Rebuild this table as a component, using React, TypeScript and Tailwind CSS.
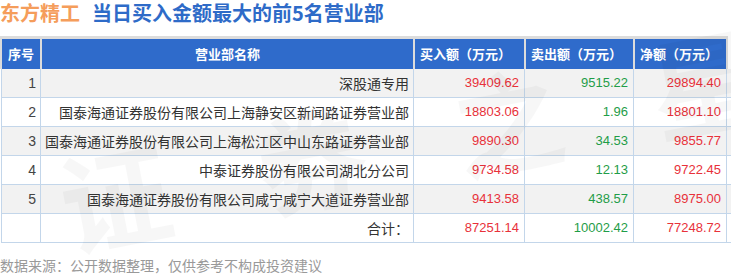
const ROWS = [
  { no: "1", name: "深股通专用", buy: "39409.62", sell: "9515.22", net: "29894.40", gray: true },
  { no: "2", name: "国泰海通证券股份有限公司上海静安区新闻路证券营业部", buy: "18803.06", sell: "1.96", net: "18801.10", gray: false },
  { no: "3", name: "国泰海通证券股份有限公司上海松江区中山东路证券营业部", buy: "9890.30", sell: "34.53", net: "9855.77", gray: true },
  { no: "4", name: "中泰证券股份有限公司湖北分公司", buy: "9734.58", sell: "12.13", net: "9722.45", gray: false },
  { no: "5", name: "国泰海通证券股份有限公司咸宁咸宁大道证券营业部", buy: "9413.58", sell: "438.57", net: "8975.00", gray: true },
];

const CJK = "font-['Noto_Sans_CJK_SC',sans-serif]";
const NUM = "font-['Liberation_Sans','Noto_Sans_CJK_SC',sans-serif]";

function DataRow({ no, name, buy, sell, net, gray }: { no: string; name: string; buy: string; sell: string; net: string; gray: boolean }) {
  return (
    <div className={`flex h-[29px] border-b border-l border-[#c3d6ea] ${gray ? "bg-[#f2f2f2]" : "bg-white"}`}>
      <div className={`w-[39px] shrink-0 border-r border-[#c3d6ea] flex items-center justify-end pr-[4px] text-[14px] text-[#444] ${NUM}`}>{no}</div>
      <div className={`w-[373px] shrink-0 border-r border-[#c3d6ea] flex items-center justify-end pr-[4px] text-[14px] text-[#333] whitespace-nowrap ${CJK}`}>{name}</div>
      <div className={`w-[111px] shrink-0 border-r border-[#c3d6ea] flex items-center justify-end pr-[5px] text-[13px] text-[#e8313a] ${NUM}`}>{buy}</div>
      <div className={`w-[109px] shrink-0 border-r border-[#c3d6ea] flex items-center justify-end pr-[5px] text-[13px] text-[#1f9d48] ${NUM}`}>{sell}</div>
      <div className={`w-[93px] shrink-0 border-r border-[#c3d6ea] flex items-center justify-end pr-[5px] text-[13px] text-[#e8313a] ${NUM}`}>{net}</div>
    </div>
  );
}

export default function App() {
  return (
    <div className="relative w-[731px] h-[274px] bg-white overflow-hidden">
      <div className={`h-[36px] flex items-start pt-[1px] text-[20px] font-bold leading-[24px] ${CJK}`}>
        <span className="text-[#f59d5b]">东方精工</span>
        <span className="ml-[12px] text-[#2e6bc8]">当日买入金额最大的前5名营业部</span>
      </div>

      <div className={`flex w-[728px] h-[33px] border-t-[3px] border-x-2 border-[#dcdcdc] bg-[#dcdcdc] gap-[2px] text-white text-[13px] font-bold ${CJK}`}>
        <div className="w-[38px] shrink-0 bg-[#2f6bcb] flex items-center justify-center">序号</div>
        <div className="w-[371px] shrink-0 bg-[#2f6bcb] flex items-center justify-center">营业部名称</div>
        <div className="w-[109px] shrink-0 bg-[#2f6bcb] flex items-center pl-[5px]">买入额（万元）</div>
        <div className="w-[107px] shrink-0 bg-[#2f6bcb] flex items-center pl-[5px]">卖出额（万元）</div>
        <div className="w-[91px] shrink-0 bg-[#2f6bcb] flex items-center pl-[5px]">净额（万元）</div>
      </div>

      <div className="ml-[1px]">
        {ROWS.map((r) => (
          <DataRow key={r.no} {...r} />
        ))}
        <DataRow no="" name="合计：" buy="87251.14" sell="10002.42" net="77248.72" gray={false} />
      </div>

      <div className={`mt-[12px] text-[14px] text-[#999] leading-[20px] ${CJK}`}>
        数据来源：公开数据整理，仅供参考不构成投资建议
      </div>

      {/* watermark */}
      <div className={`pointer-events-none absolute left-[50px] top-[150px] -rotate-[11deg] origin-top-left text-[110px] font-bold leading-none tracking-[90px] text-black/[0.03] whitespace-nowrap ${CJK}`}>
        证券之星
      </div>
    </div>
  );
}
